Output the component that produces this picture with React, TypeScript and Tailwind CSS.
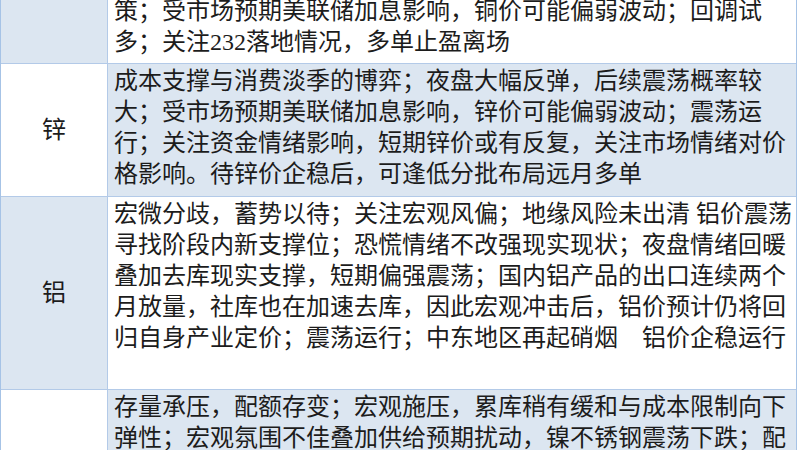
const BLUE = 'bg-[#dce6f1]';

type Row = {
  label: string;
  lines: string[];
  h: string;
  leftBlue: boolean;
};

const rows: Row[] = [
  {
    label: '',
    h: 'h-[68px]',
    leftBlue: true,
    lines: [
      '策；受市场预期美联储加息影响，铜价可能偏弱波动；回调试',
      '多；关注232落地情况，多单止盈离场',
    ],
  },
  {
    label: '锌',
    h: 'h-[133px]',
    leftBlue: false,
    lines: [
      '成本支撑与消费淡季的博弈；夜盘大幅反弹，后续震荡概率较',
      '大；受市场预期美联储加息影响，锌价可能偏弱波动；震荡运',
      '行；关注资金情绪影响，短期锌价或有反复，关注市场情绪对价',
      '格影响。待锌价企稳后，可逢低分批布局远月多单',
    ],
  },
  {
    label: '铝',
    h: 'h-[193px]',
    leftBlue: true,
    lines: [
      '宏微分歧，蓄势以待；关注宏观风偏；地缘风险未出清 铝价震荡',
      '寻找阶段内新支撑位；恐慌情绪不改强现实现状；夜盘情绪回暖',
      '叠加去库现实支撑，短期偏强震荡；国内铝产品的出口连续两个',
      '月放量，社库也在加速去库，因此宏观冲击后，铝价预计仍将回',
      '归自身产业定价；震荡运行；中东地区再起硝烟　铝价企稳运行',
    ],
  },
  {
    label: '',
    h: 'h-[100px]',
    leftBlue: false,
    lines: [
      '存量承压，配额存变；宏观施压，累库稍有缓和与成本限制向下',
      '弹性；宏观氛围不佳叠加供给预期扰动，镍不锈钢震荡下跌；配',
    ],
  },
];

export default function App() {
  return (
    <div className="w-[800px] h-[450px] overflow-hidden bg-white">
      <div
        className="w-[797px] -mt-[4px] border-x border-[#a6c3e6] text-[24px] leading-[31px] text-[#1c1c1c]"
        style={{ fontFamily: '"Liberation Serif", "Noto Sans CJK SC", serif' }}
      >
        {rows.map((r, i) => (
          <div key={i} className={`flex ${r.h} border-b border-[#b3cae8]`}>
            <div
              className={`w-[107px] shrink-0 flex items-center justify-center border-r border-[#b3cae8] ${
                r.leftBlue ? BLUE : 'bg-white'
              }`}
            >
              {r.label}
            </div>
            <div
              className={`flex-1 pl-[6px] ${i === 0 ? 'pt-0' : 'pt-[2px]'} ${
                r.leftBlue ? 'bg-white' : BLUE
              }`}
            >
              {r.lines.map((l, j) => (
                <div key={j} className="whitespace-nowrap">
                  {l}
                </div>
              ))}
            </div>
          </div>
        ))}
      </div>
    </div>
  );
}
